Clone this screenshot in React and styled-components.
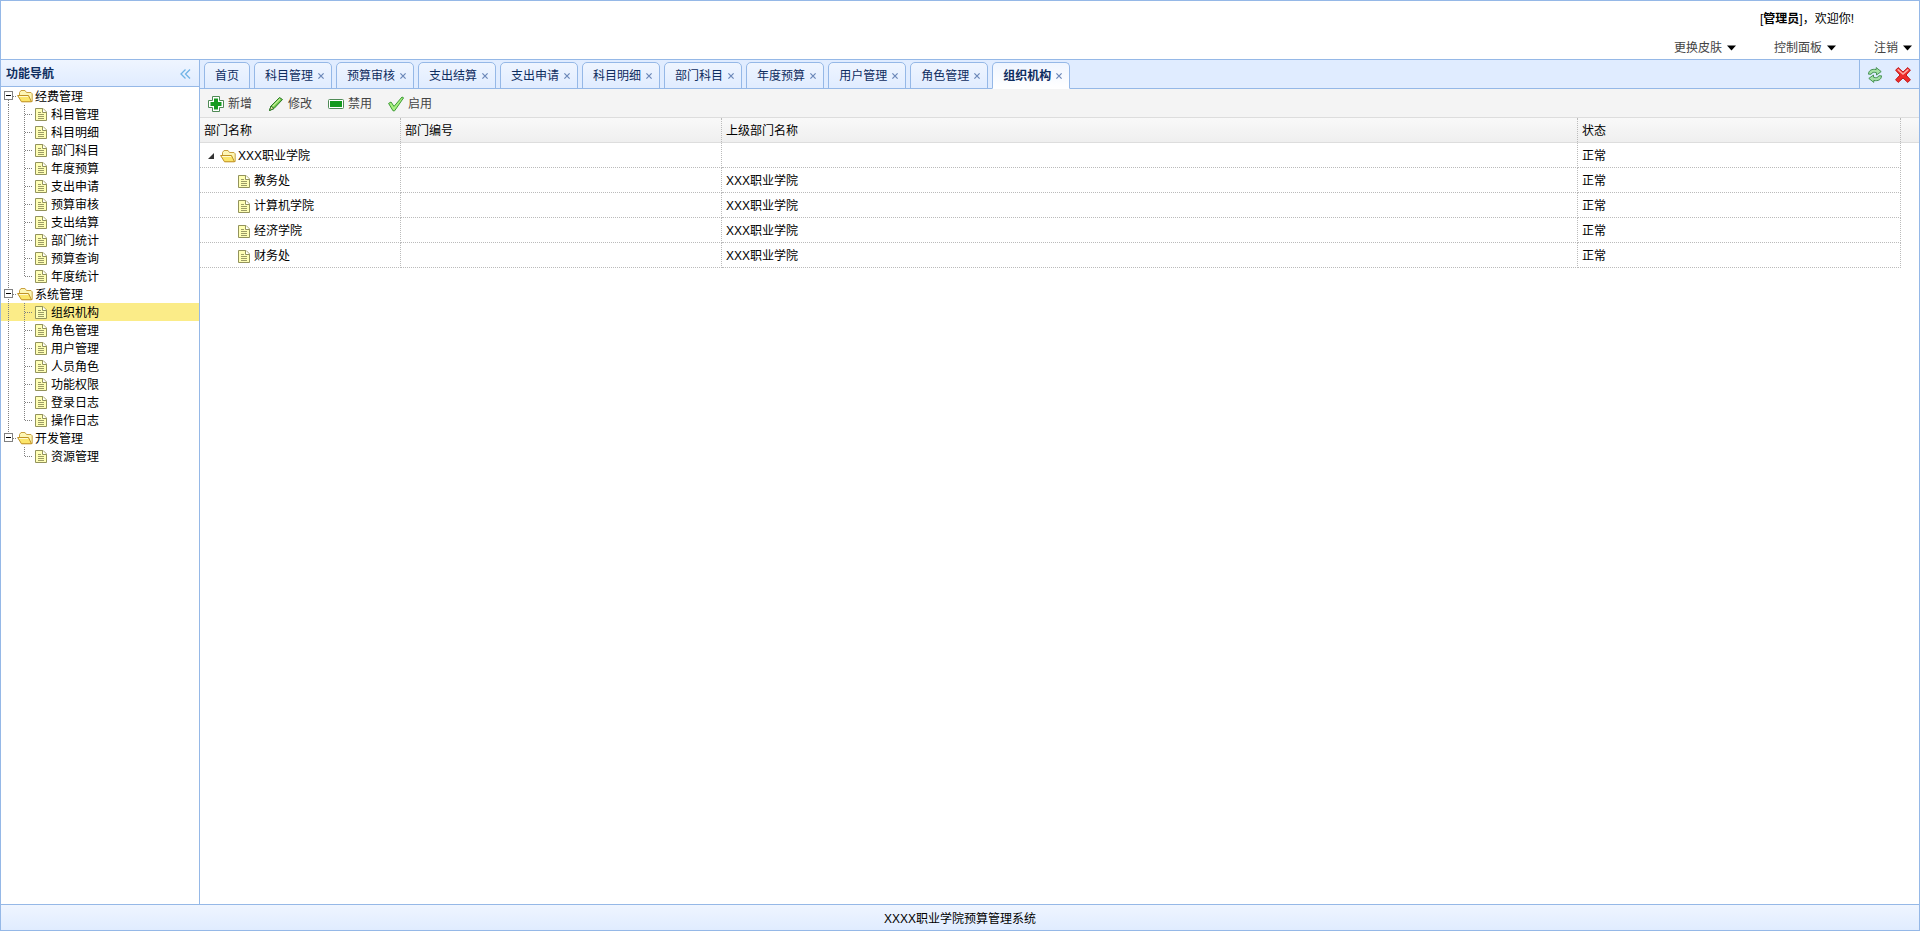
import { useState } from 'react'
import styled, { createGlobalStyle } from 'styled-components'

const navGroups = [
    {
        name: '经费管理',
        items: ['科目管理', '科目明细', '部门科目', '年度预算', '支出申请', '预算审核', '支出结算', '部门统计', '预算查询', '年度统计'],
    },
    {
        name: '系统管理',
        items: ['组织机构', '角色管理', '用户管理', '人员角色', '功能权限', '登录日志', '操作日志'],
    },
    { name: '开发管理', items: ['资源管理'] },
]

const openTabs = ['首页', '科目管理', '预算审核', '支出结算', '支出申请', '科目明细', '部门科目', '年度预算', '用户管理', '角色管理', '组织机构']

const departments = [
    { name: 'XXX职业学院', code: '', parent: '', status: '正常', root: true },
    { name: '教务处', code: '', parent: 'XXX职业学院', status: '正常' },
    { name: '计算机学院', code: '', parent: 'XXX职业学院', status: '正常' },
    { name: '经济学院', code: '', parent: 'XXX职业学院', status: '正常' },
    { name: '财务处', code: '', parent: 'XXX职业学院', status: '正常' },
]

export default function App() {
    const [active, setActive] = useState('组织机构')

    return (
        <Page>
            <GlobalStyle />
            <TopBar>
                <Welcome>[<strong>管理员</strong>]，欢迎你!</Welcome>
                <TopMenu>
                    <MenuButton>更换皮肤<Caret /></MenuButton>
                    <MenuButton>控制面板<Caret /></MenuButton>
                    <MenuButton>注销<Caret /></MenuButton>
                </TopMenu>
            </TopBar>
            <Body>
                <Sidebar>
                    <SidebarHeader>
                        <SidebarTitle>功能导航</SidebarTitle>
                        <CollapseButton aria-label="折叠"><CollapseIcon /></CollapseButton>
                    </SidebarHeader>
                    <Tree>
                        {navGroups.map((group, index) => (
                            <NavGroup
                                key={group.name}
                                group={group}
                                first={index === 0}
                                last={index === navGroups.length - 1}
                                active={active}
                                onSelect={setActive}
                            />
                        ))}
                    </Tree>
                </Sidebar>
                <Main>
                    <TabBar>
                        <TabList>
                            {openTabs.map((tab) => (
                                <Tab key={tab} $active={tab === active}>
                                    <TabLabel onClick={() => setActive(tab)}>{tab}</TabLabel>
                                    {tab !== '首页' && <CloseTab aria-label={`关闭${tab}`}><CloseIcon /></CloseTab>}
                                </Tab>
                            ))}
                        </TabList>
                        <TabTools>
                            <ToolButton aria-label="刷新"><RefreshIcon /></ToolButton>
                            <ToolButton aria-label="关闭"><CrossIcon /></ToolButton>
                        </TabTools>
                    </TabBar>
                    <Toolbar>
                        <ActionButton><AddIcon />新增</ActionButton>
                        <ActionButton><PencilIcon />修改</ActionButton>
                        <ActionButton><MinusIcon />禁用</ActionButton>
                        <ActionButton><CheckIcon />启用</ActionButton>
                    </Toolbar>
                    <GridHeader>
                        <Grid>
                            <Columns />
                            <thead>
                                <tr>
                                    <HeadCell>部门名称</HeadCell>
                                    <HeadCell>部门编号</HeadCell>
                                    <HeadCell>上级部门名称</HeadCell>
                                    <HeadCell>状态</HeadCell>
                                </tr>
                            </thead>
                        </Grid>
                    </GridHeader>
                    <GridBody>
                        <Grid>
                            <Columns />
                            <tbody>
                                {departments.map((dept) => (
                                    <tr key={dept.name}>
                                        <Cell>
                                            <NameCell $child={!dept.root}>
                                                {dept.root && <ExpandedArrow />}
                                                {dept.root ? <FolderIcon /> : <FileIcon />}
                                                <NameText $child={!dept.root}>{dept.name}</NameText>
                                            </NameCell>
                                        </Cell>
                                        <Cell>{dept.code}</Cell>
                                        <Cell>{dept.parent}</Cell>
                                        <Cell>{dept.status}</Cell>
                                    </tr>
                                ))}
                            </tbody>
                        </Grid>
                    </GridBody>
                </Main>
            </Body>
            <Footer>XXXX职业学院预算管理系统</Footer>
        </Page>
    )
}

function NavGroup({ group, first, last, active, onSelect }) {
    return (
        <>
            <TreeRow>
                <TreeLines $kind={first ? 'first' : last ? 'last' : 'node'} />
                <FolderIcon />
                <TreeLabel $group>{group.name}</TreeLabel>
            </TreeRow>
            {group.items.map((item, index) => (
                <TreeRow key={item} $selected={item === active} onClick={() => onSelect(item)}>
                    <TreeLines $kind={last ? 'blank' : 'line'} />
                    <TreeLines $kind={index === group.items.length - 1 ? 'leafEnd' : 'leaf'} />
                    <FileIcon />
                    <TreeLabel>{item}</TreeLabel>
                </TreeRow>
            ))}
        </>
    )
}

// dotted connectors of the tree, with the minus box on group rows
function TreeLines({ $kind: kind }) {
    const group = kind === 'first' || kind === 'node' || kind === 'last'
    const top = kind === 'first' ? 9 : 0
    const bottom = kind === 'last' || kind === 'leafEnd' ? 9 : 18
    return (
        <svg width="16" height="18" viewBox="0 0 16 18" shapeRendering="crispEdges" aria-hidden="true">
            {kind !== 'blank' && (
                <path d={`M7.5 ${top}V${bottom}`} stroke="#808080" strokeDasharray="1 1" fill="none" />
            )}
            {kind !== 'blank' && kind !== 'line' && (
                <path d="M8 9.5H16" stroke="#808080" strokeDasharray="1 1" fill="none" />
            )}
            {group && (
                <>
                    <rect x="3.5" y="4.5" width="8" height="8" fill="#fff" stroke="#808080" />
                    <path d="M5 8.5H10" stroke="#000" />
                </>
            )}
        </svg>
    )
}

function Columns() {
    return (
        <colgroup>
            <NameCol />
            <CodeCol />
            <col />
            <StatusCol />
        </colgroup>
    )
}

function FolderIcon() {
    return (
        <svg width="16" height="18" viewBox="0 0 16 18" aria-hidden="true">
            <path d="M2.5 9V5.5L4 3.5H8L9.5 5.5H14L15.2 6.8V14.5H5Z" fill="#fdf6b4" stroke="#c9a040" strokeLinejoin="round" />
            <path d="M0.6 8.5H11.5L14.5 14.8H4.5Z" fill="#fbe56a" stroke="#c09226" strokeLinejoin="round" />
            <path d="M2 9.5H11" stroke="#fffbd0" />
        </svg>
    )
}

function FileIcon() {
    return (
        <svg width="18" height="18" viewBox="0 0 18 18" aria-hidden="true">
            <path d="M2.5 3.5H10L13.5 7V15.5H2.5Z" fill="#ffffb5" stroke="#93935c" />
            <path d="M9.5 3.5V7.5H13.5" fill="#fff" stroke="#93935c" />
            <path d="M5 7.5H8M5 9.5H11M5 11.5H11M5 13.5H11" stroke="#9c9c66" />
        </svg>
    )
}

function ExpandedArrow() {
    return (
        <svg width="16" height="18" viewBox="0 0 16 18" aria-hidden="true">
            <path d="M10 6V12H4Z" fill="#333" />
        </svg>
    )
}

function CollapseIcon() {
    return (
        <svg width="16" height="16" viewBox="0 0 16 16" fill="none" stroke="#70b4e6" strokeWidth="1.3" aria-hidden="true">
            <path d="M7.5 3.5L3 8L7.5 12.5M12 3.5L7.5 8L12 12.5" />
        </svg>
    )
}

function CloseIcon() {
    return (
        <svg width="8" height="8" viewBox="0 0 8 8" stroke="#6a86b8" strokeWidth="1.2" aria-hidden="true">
            <path d="M1.4 1.4L6.6 6.6M6.6 1.4L1.4 6.6" />
        </svg>
    )
}

function Caret() {
    return (
        <svg width="9" height="16" viewBox="0 0 9 16" aria-hidden="true">
            <path d="M0 5.5H9L4.5 10.5Z" fill="#000" />
        </svg>
    )
}

function RefreshIcon() {
    return (
        <svg width="16" height="16" viewBox="0 0 16 16" fill="#a4e0a4" stroke="#3c8a4a" strokeWidth="0.9" strokeLinejoin="round" aria-hidden="true">
            <path d="M1.5 7.2C1.5 3.4 5 1.6 9.2 2.6V0.6L14.2 4.6L9.5 8V5.8C7 4.9 5 5.2 4.2 7.2Z" />
            <path d="M14.5 8.8C14.5 12.6 11 14.4 6.8 13.4V15.4L1.8 11.4L6.5 8V10.2C9 11.1 11 10.8 11.8 8.8Z" />
        </svg>
    )
}

function CrossIcon() {
    return (
        <svg width="16" height="16" viewBox="0 0 16 16" aria-hidden="true">
            <path
                d="M3.2 0.6L8 5L12.8 0.6L15.4 3.2L11 8L15.4 12.8L12.8 15.4L8 11L3.2 15.4L0.6 12.8L5 8L0.6 3.2Z"
                fill="#ee2c2c"
                stroke="#c01818"
                strokeLinejoin="round"
            />
            <path d="M3.2 2.8L8 7L12.8 2.8" fill="none" stroke="#ffa8a0" strokeWidth="1.6" strokeLinecap="round" />
        </svg>
    )
}

function AddIcon() {
    return (
        <svg width="16" height="16" viewBox="0 0 16 16" aria-hidden="true">
            <path
                d="M4.5 0.5H11.5V4.5H15.5V11.5H11.5V15.5H4.5V11.5H0.5V4.5H4.5Z"
                fill="#fff"
                stroke="#4f8a56"
                strokeLinejoin="round"
            />
            <path d="M6 2.5H10V6H13.5V10H10V13.5H6V10H2.5V6H6Z" fill="#139a1e" />
        </svg>
    )
}

function PencilIcon() {
    return (
        <svg width="16" height="16" viewBox="0 0 16 16" aria-hidden="true">
            <path d="M1.5 14.5L3 10L11.5 1.5L14.5 3.5L6 12.5Z" fill="#72c94a" stroke="#2c7a28" strokeLinejoin="round" />
            <path d="M4.5 10.5L12 3" stroke="#c4f09a" strokeWidth="1.2" />
            <path d="M1.5 14.5L3 10L6 12.5Z" fill="#e9d9a4" stroke="#2c7a28" strokeLinejoin="round" />
        </svg>
    )
}

function MinusIcon() {
    return (
        <svg width="16" height="16" viewBox="0 0 16 16" aria-hidden="true">
            <rect x="0.5" y="3.5" width="15" height="9" rx="1" fill="#fff" stroke="#4f8a56" />
            <rect x="2" y="5" width="12" height="6" fill="#139a1e" />
        </svg>
    )
}

function CheckIcon() {
    return (
        <svg width="16" height="16" viewBox="0 0 16 16" aria-hidden="true">
            <path d="M0.6 7.4L3 6L6 10.4L14 1L15.6 1.8L6.6 14.8H5Z" fill="#a6f080" stroke="#3c9a34" strokeLinejoin="round" />
        </svg>
    )
}

const GlobalStyle = createGlobalStyle`
    * {
        box-sizing: border-box;
    }
    body {
        margin: 0;
        color: #000;
    }
    body, button {
        font-family: 'Liberation Sans', 'Noto Sans CJK SC', sans-serif;
        font-size: 12px;
        line-height: 18px;
    }
    button {
        display: flex;
        align-items: center;
        margin: 0;
        padding: 0;
        border: none;
        background: none;
        cursor: pointer;
    }
    svg {
        flex: none;
    }
`

const Page = styled.div`
    display: flex;
    flex-direction: column;
    min-height: 100vh;
    border: 1px solid #95b8e7;
    background: #fff;
`

const TopBar = styled.header`
    display: flex;
    flex-direction: column;
    align-items: flex-end;
    justify-content: space-between;
    height: 59px;
    padding: 9px 7px 2px;
    border-bottom: 1px solid #95b8e7;
`

const Welcome = styled.div`
    padding-right: 58px;
`

const TopMenu = styled.nav`
    display: flex;
    gap: 38px;
`

const MenuButton = styled.button`
    gap: 5px;
    color: #444;
`

const Body = styled.div`
    display: flex;
    flex: 1;
`

const Sidebar = styled.aside`
    width: 199px;
    border-right: 1px solid #95b8e7;
`

const SidebarHeader = styled.div`
    display: flex;
    align-items: center;
    justify-content: space-between;
    height: 27px;
    padding: 1px 5px 0;
    border-bottom: 1px solid #95b8e7;
    background: linear-gradient(to bottom, #eff5ff, #e0ecff);
`

const SidebarTitle = styled.h2`
    margin: 0;
    font-size: 12px;
    font-weight: bold;
    color: #0e2d5f;
`

const CollapseButton = styled.button`
    height: 16px;
`

const Tree = styled.ul`
    margin: 0;
    padding: 0;
    list-style: none;
`

const TreeRow = styled.li`
    display: flex;
    height: 18px;
    background: ${props => props.$selected ? '#fbec88' : 'transparent'};
    line-height: 20px;
    cursor: pointer;
`

const TreeLabel = styled.span`
    padding-left: ${props => props.$group ? '2px' : '0'};
`

const Main = styled.main`
    display: flex;
    flex-direction: column;
    flex: 1;
    min-width: 0;
`

const TabBar = styled.div`
    display: flex;
    justify-content: space-between;
    height: 29px;
    border-bottom: 1px solid #95b8e7;
    background: #e0ecff;
`

const TabList = styled.div`
    display: flex;
    align-items: flex-end;
    gap: 4px;
    height: 29px;
    padding-left: 4px;
`

const Tab = styled.div`
    display: flex;
    align-items: center;
    height: 27px;
    padding: 0 10px;
    border: 1px solid #95b8e7;
    border-bottom-color: ${props => props.$active ? '#fff' : '#95b8e7'};
    border-radius: 5px 5px 0 0;
    background: ${props => props.$active
        ? 'linear-gradient(to bottom, #eff5ff, #fff)'
        : 'linear-gradient(to bottom, #eff5ff, #e0ecff)'};
    font-weight: ${props => props.$active ? 'bold' : 'normal'};

    &:not(:first-child) {
        padding-right: 6px;
    }
`

const TabLabel = styled.button`
    color: #0e2d5f;
    font-weight: inherit;
`

const CloseTab = styled.button`
    padding-left: 4px;
`

const TabTools = styled.div`
    display: flex;
    align-items: center;
    gap: 12px;
    padding: 2px 8px 0 7px;
    border-left: 1px solid #95b8e7;
`

const ToolButton = styled.button`
    height: 16px;
`

const Toolbar = styled.div`
    display: flex;
    align-items: center;
    gap: 16px;
    height: 29px;
    padding: 1px 8px 0;
    border-bottom: 1px solid #ddd;
    background: #f4f4f4;
`

const ActionButton = styled.button`
    gap: 4px;
    color: #444;
`

const GridHeader = styled.div`
    padding-right: 18px;
    border-bottom: 1px solid #ddd;
    background: linear-gradient(to bottom, #f9f9f9, #efefef);
`

const GridBody = styled.div`
    flex: 1;
    padding-right: 18px;
`

const Grid = styled.table`
    width: 100%;
    table-layout: fixed;
    border-collapse: separate;
    border-spacing: 0;
`

const NameCol = styled.col`
    width: 201px;
`

const CodeCol = styled.col`
    width: 321px;
`

const StatusCol = styled.col`
    width: 323px;
`

const HeadCell = styled.th`
    height: 24px;
    padding: 2px 4px 0;
    border-right: 1px dotted #bbb;
    font-weight: normal;
    text-align: left;
`

const Cell = styled.td`
    height: 25px;
    padding: 2px 4px 0;
    border-right: 1px dotted #bbb;
    border-bottom: 1px dotted #bbb;
`

const NameCell = styled.div`
    display: flex;
    align-items: center;
    padding-left: ${props => props.$child ? '32px' : '0'};
`

const NameText = styled.span`
    padding-left: ${props => props.$child ? '0' : '2px'};
`

const Footer = styled.footer`
    height: 26px;
    padding-top: 5px;
    border-top: 1px solid #95b8e7;
    background: linear-gradient(to bottom, #eff5ff, #e0ecff);
    text-align: center;
`
